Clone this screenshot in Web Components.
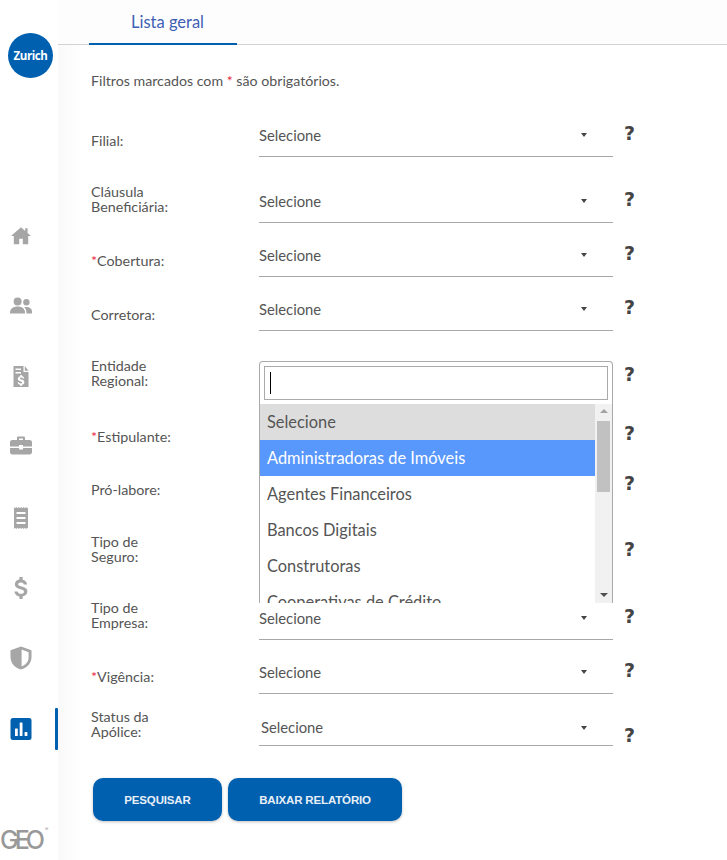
<!DOCTYPE html>
<html lang="pt-BR">
<head>
<meta charset="utf-8">
<title>Lista geral</title>
<style>
  html, body { margin: 0; height: 100%; background: #fff; }
  body { font-family: Lato, "Open Sans", sans-serif; color: #555; }
</style>
</head>
<body>
<relatorio-app>
  <app-sidebar slot="sidebar">
    <nav-icon icon="home"></nav-icon>
    <nav-icon icon="people"></nav-icon>
    <nav-icon icon="invoice"></nav-icon>
    <nav-icon icon="briefcase"></nav-icon>
    <nav-icon icon="receipt"></nav-icon>
    <nav-icon icon="dollar"></nav-icon>
    <nav-icon icon="shield"></nav-icon>
    <nav-icon icon="chart" active></nav-icon>
  </app-sidebar>
  <tab-header>Lista geral</tab-header>
  <p class="note" slot="note">Filtros marcados com <span style="color:#e8283c">*</span> são obrigatórios.</p>

  <filter-row style="--h:45px"><span slot="label">Filial:</span><filter-select></filter-select></filter-row>
  <filter-row style="--h:66px"><span slot="label">Cláusula Beneficiária:</span><filter-select></filter-select></filter-row>
  <filter-row style="--h:54px" required><span slot="label">Cobertura:</span><filter-select></filter-select></filter-row>
  <filter-row style="--h:54px"><span slot="label">Corretora:</span><filter-select></filter-select></filter-row>
  <filter-row style="--h:66px;--help-b:14px"><span slot="label">Entidade Regional:</span>
    <filter-select open>
      <select-option state="current">Selecione</select-option>
      <select-option state="active">Administradoras de Imóveis</select-option>
      <select-option>Agentes Financeiros</select-option>
      <select-option>Bancos Digitais</select-option>
      <select-option>Construtoras</select-option>
      <select-option>Cooperativas de Crédito</select-option>
    </filter-select>
  </filter-row>
  <filter-row style="--h:56px;--help-b:11px" required><span slot="label">Estipulante:</span></filter-row>
  <filter-row style="--h:53px;--help-b:14px"><span slot="label">Pró-labore:</span></filter-row>
  <filter-row style="--h:67px"><span slot="label">Tipo de Seguro:</span></filter-row>
  <filter-row style="--h:67px;--label-b:10px"><span slot="label">Tipo de Empresa:</span><filter-select></filter-select></filter-row>
  <filter-row style="--h:54px;--label-b:10px" required><span slot="label">Vigência:</span><filter-select></filter-select></filter-row>
  <filter-row style="--h:52px;--help-b:2px;--label-b:7px"><span slot="label">Status da Apólice:</span><filter-select style="--select-h:38px;--select-pad:2px;--select-top:0"></filter-select></filter-row>

  <div class="actions" slot="actions">
    <action-button style="--w:129px">PESQUISAR</action-button>
    <action-button style="--w:174px">BAIXAR RELATÓRIO</action-button>
  </div>
</relatorio-app>

<script>
const ICONS = {
  home: '<path d="M12 3.2 2 12h2.8v8.2h5.4v-5.4h3.6v5.4h5.4V12H22l-3.4-3V4.2h-2.4v2.7z"/>',
  people: '<circle cx="8.6" cy="7.4" r="4"/><circle cx="17.4" cy="8.2" r="3.2"/><path d="M1 18.600c0-4 3.600-6 7.600-6s7.400 2 7.400 6v1H1z"/><path d="M17.400 13c3 0 5.600 1.500 5.600 4.600v2h-5.600v-1.400c0-2-.8-3.600-2.200-4.900.7-.2 1.400-.3 2.200-.3z"/>',
  invoice: '<path fill-rule="evenodd" d="M4.500 1h10v6h5v15h-15zM6.500 3.500v1.600h5.500V3.500zm0 3.400v1.600h5.500V6.900zM15.800 1l3.700 4.800h-3.700zM11.300 10v1.200c-1.500.3-2.500 1.300-2.500 2.600 0 1.600 1.300 2.200 2.900 2.600 1.100.3 1.500.6 1.500 1.100s-.5.9-1.500.9c-1 0-1.600-.4-1.700-1.100H8.600c.1 1.500 1.200 2.300 2.700 2.600V21h1.600v-1.200c1.500-.3 2.500-1.200 2.500-2.600 0-1.800-1.400-2.400-3-2.800-1-.3-1.400-.5-1.400-1s.5-.8 1.300-.8c.9 0 1.300.4 1.400 1h1.500c-.1-1.200-.9-2.200-2.300-2.500V10z"/>',
  briefcase: '<path fill-rule="evenodd" d="M8 5V2.700C8 2 8.500 1.500 9.200 1.500h5.600c.7 0 1.200.5 1.200 1.200V5h4.800C22 5 23 6 23 7.200v4.300H14V10h-4v1.500H1V7.200C1 6 2 5 3.200 5zm2-1.500V5h4V3.500zM1 13h9v1.500h4V13h9v4.300c0 1.200-1 2.200-2.200 2.200H3.200C2 19.500 1 18.500 1 17.300z"/>',
  receipt: '<path fill-rule="evenodd" d="M5 1l1.200 1.200L7.400 1l1.200 1.200L9.800 1 11 2.200 12.200 1l1.200 1.200L14.600 1l1.200 1.200L17 1l1.200 1.200L19 1.500v21l-.8-.7L17 23l-1.200-1.200-1.200 1.200-1.200-1.200-1.200 1.200L11 21.800 9.800 23l-1.200-1.200L7.400 23l-1.200-1.200L5 23zM7.500 6v2h9V6zm0 5v2h9v-2zm0 5v2h9v-2z"/>',
  dollar: '<path d="M10.400 1h3.200v2.700c2.600.5 4.300 2.300 4.500 4.800h-3.300c-.2-1.300-1.100-2.100-2.900-2.100-1.700 0-2.800.8-2.800 1.900 0 1.100 1 1.600 3.500 2.200 3.400.8 5.800 2 5.800 5.100 0 2.700-2 4.300-4.800 4.800V23h-3.200v-2.600c-2.800-.5-4.800-2.300-5-5h3.300c.2 1.500 1.300 2.400 3.300 2.400 2.100 0 3-1 3-2.100 0-1.200-.9-1.900-3.400-2.500-3.300-.8-5.700-2-5.700-5 0-2.400 1.900-4.100 4.500-4.600z"/>',
  shield: '<path fill-rule="evenodd" d="M12 .5 1.500 4.300v7c0 5.700 4.400 10.600 10.500 12.200 6.100-1.600 10.500-6.500 10.500-12.200v-7zm.6 3v16.900c4.100-1.400 7-4.800 7-8.900V6.300z"/>'
};

class RelatorioApp extends HTMLElement {
  constructor() {
    super();
    this.attachShadow({ mode: 'open' });
    this.shadowRoot.innerHTML = `
      <style>
        :host { display: flex; width: 727px; height: 860px; overflow: hidden; }
        .content {
          flex: 1;
          min-width: 0;
          background: linear-gradient(to right, #f9f9f9, #fff 24px);
        }
        .form { display: flex; flex-direction: column; padding-left: 33px; }
        ::slotted(.note) {
          margin: 0;
          height: 67px;
          padding-top: 27px;
          box-sizing: border-box;
          font-size: 14.200px;
          line-height: 18px;
          color: #555;
        }
        ::slotted(.actions) { display: flex; gap: 6px; margin: 32px 0 0 2px; }
      </style>
      <slot name="sidebar"></slot>
      <div class="content">
        <slot name="header"></slot>
        <div class="form">
          <slot name="note"></slot>
          <slot></slot>
          <slot name="actions"></slot>
        </div>
      </div>`;
  }
}

class AppSidebar extends HTMLElement {
  constructor() {
    super();
    this.attachShadow({ mode: 'open' });
    this.shadowRoot.innerHTML = `
      <style>
        :host {
          display: flex;
          flex-direction: column;
          flex: none;
          width: 58px;
          height: 860px;
          box-sizing: border-box;
          background: #fff;
          padding-top: 33px;
        }
        .zurich {
          width: 45px;
          height: 45px;
          margin-left: 8px;
          border-radius: 50%;
          background: #0060b0;
          color: #fff;
          font: 700 11.500px/45px "Open Sans", sans-serif;
          letter-spacing: -.4px;
          text-align: center;
        }
        nav { display: flex; flex-direction: column; gap: 46.400px; margin-top: 146px; }
        .geo {
          display: flex;
          margin-top: 87px;
          height: 24px;
          font: 500 25px/24px "Inter", sans-serif;
          letter-spacing: -4px;
          color: #999;
        }
        sup { margin: -3px 0 0 4px; font-size: 5px; letter-spacing: 0; line-height: 8px; }
      </style>
      <div class="zurich">Zurich</div>
      <nav><slot></slot></nav>
      <div class="geo"><span>GEO</span><sup>®</sup></div>`;
  }
}

class NavIcon extends HTMLElement {
  constructor() {
    super();
    this.attachShadow({ mode: 'open' });
  }
  connectedCallback() {
    const name = this.getAttribute('icon');
    const body = name === 'chart'
      ? '<rect x="1.500" y="1" width="21" height="22" rx="2.500" fill="#0060b0"/><g fill="#fff"><rect x="6" y="11.500" width="2.800" height="7.500" rx=".6"/><rect x="10.700" y="5.500" width="2.800" height="13.500" rx=".6"/><rect x="15.600" y="15" width="2.800" height="4" rx=".6"/></g>'
      : ICONS[name];
    this.shadowRoot.innerHTML = `
      <style>
        :host { display: block; position: relative; height: 24px; padding-left: 9px; }
        svg { display: block; width: 24px; height: 24px; fill: #a6a6a6; }
        .bar { position: absolute; left: 55px; top: -9px; width: 3px; height: 42px; background: #0060b0; border-radius: 1px; }
      </style>
      <svg viewBox="0 0 24 24" aria-hidden="true">${body}</svg>
      ${this.hasAttribute('active') ? '<div class="bar"></div>' : ''}`;
  }
}

class TabHeader extends HTMLElement {
  constructor() {
    super();
    this.attachShadow({ mode: 'open' });
    this.shadowRoot.innerHTML = `
      <style>
        :host {
          display: block;
          height: 45px;
          box-sizing: border-box;
          padding-left: 31px;
          border-bottom: 1px solid #d2d2d2;
          background: #fdfdfd;
        }
        .tab {
          width: 148px;
          height: 45px;
          box-sizing: border-box;
          border-bottom: 2px solid #0060b0;
          padding-left: 9px;
          text-align: center;
          font-size: 16.500px;
          line-height: 44px;
          color: #3f5fb5;
        }
      </style>
      <div class="tab"><slot></slot></div>`;
  }
  connectedCallback() { this.slot = 'header'; }
}

class FilterRow extends HTMLElement {
  constructor() {
    super();
    this.attachShadow({ mode: 'open' });
    this.shadowRoot.innerHTML = `
      <style>
        :host {
          display: grid;
          grid-template-columns: 168px 354px auto;
          align-items: end;
          height: var(--h, 54px);
        }
        .label {
          width: 85px;
          padding-bottom: var(--label-b, 9px);
          font-size: 14.300px;
          line-height: 15px;
          color: #555;
        }
        .req { color: #e8283c; }
        .help {
          margin-left: 11px;
          padding-bottom: var(--help-b, 15px);
          font: 700 19px/17px "DejaVu Sans", sans-serif;
          color: #444;
        }
      </style>
      <div class="label"><span class="req"></span><slot name="label"></slot></div>
      <div class="field"><slot></slot></div>
      <div class="help">?</div>`;
  }
  connectedCallback() {
    if (this.hasAttribute('required')) this.shadowRoot.querySelector('.req').textContent = '*';
  }
}

class FilterSelect extends HTMLElement {
  constructor() {
    super();
    this.attachShadow({ mode: 'open' });
  }
  connectedCallback() {
    const open = this.hasAttribute('open');
    this.shadowRoot.innerHTML = `
      <style>
        :host {
          display: flex;
          align-items: center;
          position: relative;
          box-sizing: border-box;
          height: var(--select-h, 45px);
          padding-left: var(--select-pad, 0);
          padding-top: var(--select-top, 1px);
          border-bottom: 1px solid #a8a8a8;
          font-size: 14.800px;
          color: #555;
        }
        .arrow {
          position: absolute;
          left: 322px;
          top: 50%;
          margin-top: -1px;
          border: 3px solid transparent;
          border-top: 4px solid #444;
          border-bottom: 0;
        }
        .drop {
          position: absolute;
          left: 0;
          top: 9px;
          width: 354px;
          height: 242px;
          box-sizing: border-box;
          display: flex;
          flex-direction: column;
          background: #fff;
          border: 1px solid #aaa;
          border-bottom: 0;
          border-radius: 4px 4px 0 0;
          z-index: 2;
        }
        .search { padding: 4px 4px 4px; }
        .input { height: 32px; border: 1px solid #aaa; position: relative; }
        .caret { position: absolute; left: 5px; top: 5px; width: 1px; height: 22px; background: #000; }
        .body { flex: 1; display: flex; min-height: 0; }
        .list { flex: 1; overflow: hidden; }
        .scroll { flex: none; width: 17px; position: relative; background: #f1f1f1; }
        .thumb { position: absolute; left: 2px; right: 2px; top: 17px; height: 71px; background: #c1c1c1; }
        .up, .down { position: absolute; left: 5px; border: 4px solid transparent; }
        .up { top: 5px; border-top: 0; border-bottom-color: #a3a3a3; }
        .down { bottom: 6px; border-bottom: 0; border-top-color: #505050; }
      </style>
      ${open ? `
      <div class="drop">
        <div class="search"><div class="input"><div class="caret"></div></div></div>
        <div class="body">
          <div class="list"><slot></slot></div>
          <div class="scroll"><div class="up"></div><div class="thumb"></div><div class="down"></div></div>
        </div>
      </div>` : `<span>Selecione</span><span class="arrow"></span>`}`;
  }
}

class SelectOption extends HTMLElement {
  constructor() {
    super();
    this.attachShadow({ mode: 'open' });
    this.shadowRoot.innerHTML = `
      <style>
        :host {
          display: block;
          height: 36px;
          padding-left: 7px;
          font-size: 16.400px;
          line-height: 36px;
          color: #555;
          white-space: nowrap;
        }
        :host([state="current"]) { background: #ddd; }
        :host([state="active"]) { background: #5897fb; color: #fff; }
      </style>
      <slot></slot>`;
  }
}

class ActionButton extends HTMLElement {
  constructor() {
    super();
    this.attachShadow({ mode: 'open' });
    this.shadowRoot.innerHTML = `
      <style>
        :host { display: block; }
        button {
          display: block;
          width: var(--w, 129px);
          height: 43px;
          border: 0;
          border-radius: 10px;
          background: #0060b0;
          color: #e8eff7;
          font: 700 11.500px "Liberation Sans", sans-serif;
          letter-spacing: -.15px;
          box-shadow: 0 1px 3px rgba(0, 0, 0, .25);
          cursor: pointer;
        }
      </style>
      <button type="button"><slot></slot></button>`;
  }
}

customElements.define('relatorio-app', RelatorioApp);
customElements.define('app-sidebar', AppSidebar);
customElements.define('nav-icon', NavIcon);
customElements.define('tab-header', TabHeader);
customElements.define('filter-row', FilterRow);
customElements.define('filter-select', FilterSelect);
customElements.define('select-option', SelectOption);
customElements.define('action-button', ActionButton);
</script>
</body>
</html>
